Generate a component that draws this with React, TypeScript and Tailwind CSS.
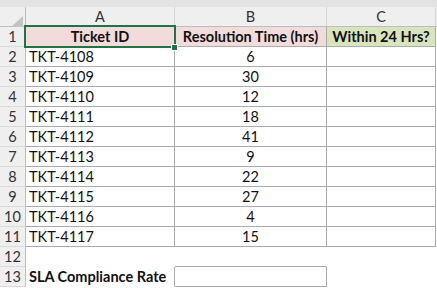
const rows: [string, string][] = [
  ["TKT-4108", "6"],
  ["TKT-4109", "30"],
  ["TKT-4110", "12"],
  ["TKT-4111", "18"],
  ["TKT-4112", "41"],
  ["TKT-4113", "9"],
  ["TKT-4114", "22"],
  ["TKT-4115", "27"],
  ["TKT-4116", "4"],
  ["TKT-4117", "15"],
];

const rowHead =
  "h-5 flex items-center justify-center bg-[#efefef] text-[#333] border-r border-b border-r-[#bdbdbd] border-b-[#dadada]";
const cell = "h-5 flex items-center border-r border-b border-[#ababab]";

export default function App() {
  return (
    <div
      className="w-[437px] h-[288px] bg-white overflow-hidden relative text-[14.5px] text-[#111]"
      style={{ fontFamily: "Lato, 'Open Sans', sans-serif" }}
    >
      <div className="h-[7px] bg-[#e3e3e3]" />
      <div className="grid grid-cols-[26px_149px_152px_109px_1px]">
        {/* column headers */}
        <div className="h-5 bg-[#efefef] border-r border-b border-r-[#bdbdbd] border-b-[#bdbdbd] relative">
          <svg className="absolute left-[11px] top-[9px]" width="12" height="11" viewBox="0 0 12 11">
            <polygon points="12,0 12,11 0,11" fill="#c4c4c4" />
          </svg>
        </div>
        {["A", "B", "C"].map((l) => (
          <div
            key={l}
            className="h-5 flex items-center justify-center bg-[#efefef] text-[#333] border-r border-b border-r-[#d4d4d4] border-b-[#bdbdbd]"
          >
            {l}
          </div>
        ))}
        <div className="h-5 bg-[#efefef] border-b border-[#bdbdbd]" />

        {/* row 1 */}
        <div className={rowHead}>1</div>
        <div className={`${cell} justify-center font-bold bg-[#f2dcdb]`}>Ticket ID</div>
        <div className={`${cell} justify-center font-bold bg-[#f2dcdb]`}>Resolution Time (hrs)</div>
        <div className={`${cell} justify-center font-bold bg-[#d8e4bc]`}>Within 24 Hrs?</div>
        <div />

        {rows.map(([id, t], i) => (
          <div key={id} className="contents">
            <div className={rowHead}>{i + 2}</div>
            <div className={`${cell} pl-[3px]`}>{id}</div>
            <div className={`${cell} justify-center`}>{t}</div>
            <div className={cell} />
            <div />
          </div>
        ))}

        {/* row 12 */}
        <div className={rowHead}>12</div>
        <div className="h-5 border-r border-b border-transparent" />
        <div className="h-5 border-r border-b border-r-transparent border-b-[#ababab]" />
        <div className="h-5" />
        <div />

        {/* row 13 */}
        <div className={rowHead}>13</div>
        <div className="h-5 flex items-center pl-[3px] font-bold border-r border-b border-r-[#ababab] border-b-transparent">
          SLA Compliance Rate
        </div>
        <div className={cell} />
        <div className="h-5" />
        <div />
      </div>

      {/* selection on A1 */}
      <div className="absolute left-[24px] top-[25px] w-[152px] h-[23px] border-2 border-[#217346] pointer-events-none" />
      <div className="absolute left-[171px] top-[44px] w-[7px] h-[7px] bg-[#217346] border border-white" />
    </div>
  );
}
